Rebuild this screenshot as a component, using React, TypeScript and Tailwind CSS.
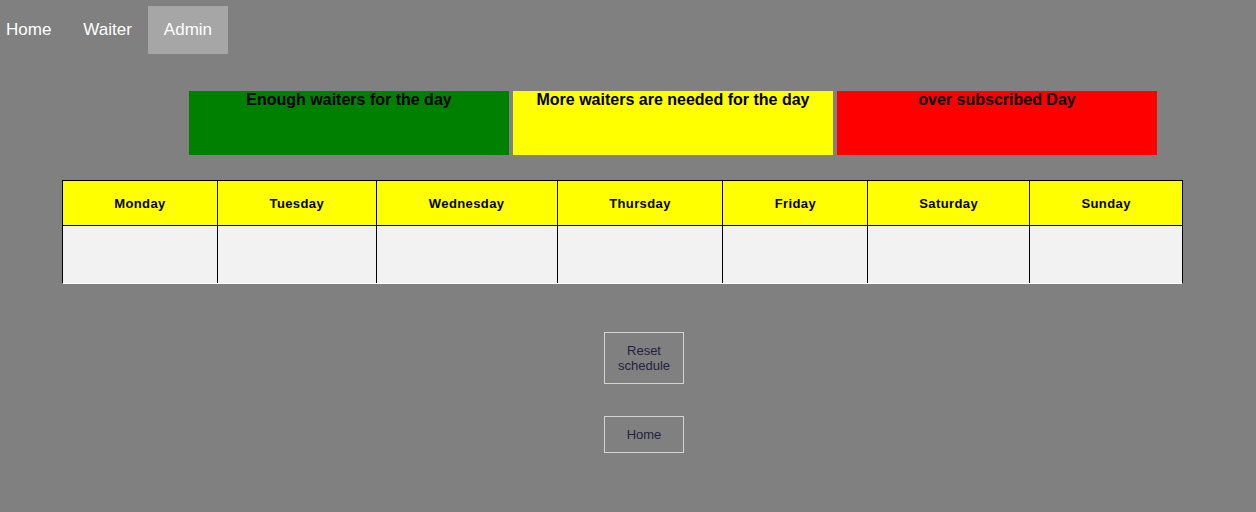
const days = [
  { name: "Monday", w: "w-[155px]" },
  { name: "Tuesday", w: "w-[159px]" },
  { name: "Wednesday", w: "w-[181px]" },
  { name: "Thursday", w: "w-[166px]" },
  { name: "Friday", w: "w-[145px]" },
  { name: "Saturday", w: "w-[162px]" },
  { name: "Sunday", w: "w-[152px]" },
];

const legend = [
  { label: "Enough waiters for the day", bg: "bg-[#008000]" },
  { label: "More waiters are needed for the day", bg: "bg-[#ffff00]" },
  { label: "over subscribed Day", bg: "bg-[#ff0000]" },
];

export default function App() {
  return (
    <div className="min-h-[512px] bg-[#808080] font-['Liberation_Sans',Arial,sans-serif]">
      {/* Nav */}
      <nav className="flex pt-[6px] text-[17px] text-white">
        <a className="h-[48px] flex items-center pl-[6px] pr-4">Home</a>
        <a className="h-[48px] flex items-center px-4">Waiter</a>
        <a className="h-[48px] flex items-center px-4 bg-[#a6a6a6]">Admin</a>
      </nav>

      {/* Legend */}
      <div className="flex gap-1 ml-[189px] mt-[37px]">
        {legend.map((item) => (
          <div
            key={item.label}
            className={`w-[320px] h-[64px] ${item.bg} text-center text-[16px] leading-[18px] font-bold text-black`}
          >
            {item.label}
          </div>
        ))}
      </div>

      {/* Schedule table */}
      <div className="ml-[62px] mt-[25px] w-[1121px] border-t border-l border-r border-black border-b border-b-white">
        <div className="flex border-b border-black bg-[#ffff00]">
          {days.map((d, i) => (
            <div
              key={d.name}
              className={`${d.w} h-[44px] pt-[2px] flex items-center justify-center text-[13px] font-bold tracking-[0.4px] text-black ${
                i < days.length - 1 ? "border-r border-black" : ""
              }`}
            >
              {d.name}
            </div>
          ))}
        </div>
        <div className="flex bg-[#f2f2f2]">
          {days.map((d, i) => (
            <div
              key={d.name}
              className={`${d.w} h-[57px] ${i < days.length - 1 ? "border-r border-black" : ""}`}
            />
          ))}
        </div>
      </div>

      {/* Actions */}
      <div className="flex flex-col ml-[604px] mt-[48px] gap-[32px]">
        <button className="w-[80px] h-[52px] border border-[#d4d4d4] text-[13px] leading-[15px] text-[#1f2340]">
          Reset
          <br />
          schedule
        </button>
        <button className="w-[80px] h-[37px] border border-[#d4d4d4] text-[13px] leading-[15px] text-[#1f2340]">
          Home
        </button>
      </div>
    </div>
  );
}
